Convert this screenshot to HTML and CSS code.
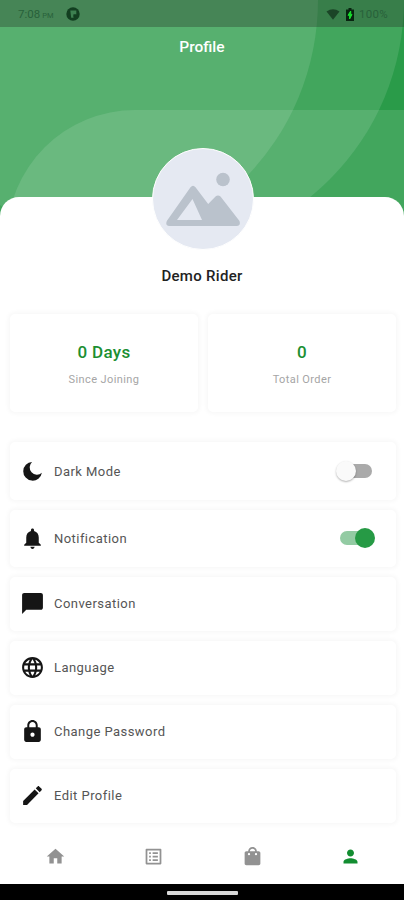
FILE: index.html
```
<!DOCTYPE html>
<html lang="en">
<head>
    <meta charset="UTF-8">
    <meta name="viewport" content="width=device-width, initial-scale=1.0">
    <title>Profile</title>
    <link rel="stylesheet" href="styles.css">
</head>
<body>

    <!-- Header -->
    <header class="header">
        <svg class="header-bg" width="404" height="220" viewBox="0 0 404 220">
            <g fill="#fff" fill-opacity="0.112">
                <circle cx="150" cy="0" r="254"/>
                <circle cx="64" cy="0" r="254"/>
                <path d="M7 238A128 128 0 0 1 135 110H404V238Z"/>
            </g>
        </svg>
        <div class="status-bar">
            <div class="time"><span>7:08</span><small>PM</small></div>
            <svg width="14" height="14" viewBox="0 0 14 14">
                <circle cx="7" cy="7" r="6.7" fill="#123f20"/>
                <path d="M4.3 3.5h6v4H7.6v3.2H5.2z" fill="#3d8050"/>
                <path d="M7.5 7.5h2.8l-2.8 3z" fill="#123f20"/>
            </svg>
            <div class="status-right">
                <svg width="14" height="11" viewBox="0 0 14 11"><path d="M0.5 2.5Q7-1.8 13.5 2.5L7 10.8z" fill="#1b4527"/></svg>
                <svg class="battery" width="8" height="13" viewBox="0 0 8 13">
                    <path d="M2.5 0h3v1.5H8V13H0V1.5h2.5z" fill="#082410"/>
                    <path d="M4.7 3L2 7.3h1.6V11L6 6.4H4.7z" fill="#18e02d" stroke="#18e02d"/>
                </svg>
                <span class="percent">100%</span>
            </div>
        </div>
        <h1>Profile</h1>
    </header>

    <!-- Profile -->
    <main class="sheet">
        <div class="avatar">
            <svg width="100" height="100" viewBox="0 0 100 100" fill="#bac2cc">
                <circle cx="70" cy="30.5" r="6.8"/>
                <path fill-rule="evenodd" d="M37.5 38.3Q40 35.3 42.5 38.3L55.2 55L62.5 47.5Q65 45.6 67.5 47.5L86.5 72Q88 76.5 84 77H16Q12 76.5 13.8 72ZM39.5 50L24 71H49Z"/>
            </svg>
        </div>
        <h2>Demo Rider</h2>

        <div class="stats">
            <div class="card stat">
                <strong>0 Days</strong>
                <span>Since Joining</span>
            </div>
            <div class="card stat">
                <strong>0</strong>
                <span>Total Order</span>
            </div>
        </div>

        <!-- Settings -->
        <div class="menu">
            <div class="card row row-dark">
                <svg viewBox="0 0 24 24"><path d="M11.6 2.8A9 9 0 1 0 21 13.2A6.9 6.9 0 0 1 11.6 2.8z"/></svg>
                <span>Dark Mode</span>
                <div class="switch"></div>
            </div>
            <div class="card row row-notify">
                <svg viewBox="0 0 24 24"><path d="M12 22c1.1 0 2-.9 2-2h-4c0 1.1.89 2 2 2zm6-6v-5c0-3.07-1.64-5.64-4.5-6.32V4c0-.83-.67-1.5-1.5-1.5s-1.5.67-1.5 1.5v.68C7.63 5.36 6 7.92 6 11v5l-2 2v1h16v-1l-2-2z"/></svg>
                <span>Notification</span>
                <div class="switch on"></div>
            </div>
            <div class="card row">
                <svg viewBox="0 0 24 24"><path d="M20 2H4c-1.1 0-1.99.9-1.99 2L2 22l4-4h14c1.1 0 2-.9 2-2V4c0-1.1-.9-2-2-2z"/></svg>
                <span>Conversation</span>
            </div>
            <div class="card row">
                <svg viewBox="0 0 24 24"><path d="M11.99 2C6.47 2 2 6.48 2 12s4.47 10 9.99 10C17.52 22 22 17.52 22 12S17.52 2 11.99 2zm6.93 6h-2.95c-.32-1.25-.78-2.45-1.38-3.56 1.84.63 3.37 1.91 4.33 3.56zM12 4.04c.83 1.2 1.48 2.53 1.91 3.96h-3.82c.43-1.43 1.08-2.76 1.91-3.96zM4.26 14C4.1 13.36 4 12.69 4 12s.1-1.36.26-2h3.38c-.08.66-.14 1.32-.14 2s.06 1.34.14 2H4.26zm.82 2h2.95c.32 1.25.78 2.45 1.38 3.56-1.84-.63-3.37-1.9-4.33-3.56zm2.95-8H5.08c.96-1.66 2.49-2.93 4.33-3.56C8.81 5.55 8.35 6.75 8.03 8zM12 19.96c-.83-1.2-1.48-2.53-1.91-3.96h3.82c-.43 1.43-1.08 2.76-1.91 3.96zM14.34 14H9.66c-.09-.66-.16-1.32-.16-2s.07-1.35.16-2h4.68c.09.65.16 1.32.16 2s-.07 1.34-.16 2zm.25 5.56c.6-1.11 1.06-2.31 1.38-3.56h2.95c-.96 1.65-2.49 2.93-4.33 3.56zM16.36 14c.08-.66.14-1.32.14-2s-.06-1.34-.14-2h3.38c.16.64.26 1.31.26 2s-.1 1.36-.26 2h-3.38z"/></svg>
                <span>Language</span>
            </div>
            <div class="card row">
                <svg viewBox="0 0 24 24"><path d="M18 8h-1V6c0-2.76-2.24-5-5-5S7 3.24 7 6v2H6c-1.1 0-2 .9-2 2v10c0 1.1.9 2 2 2h12c1.1 0 2-.9 2-2V10c0-1.1-.9-2-2-2zm-6 9c-1.1 0-2-.9-2-2s.9-2 2-2 2 .9 2 2-.9 2-2 2zm3.1-9H8.9V6c0-1.71 1.39-3.1 3.1-3.1 1.71 0 3.1 1.39 3.1 3.1v2z"/></svg>
                <span>Change Password</span>
            </div>
            <div class="card row">
                <svg viewBox="0 0 24 24"><path d="M3 17.25V21h3.75L17.81 9.94l-3.75-3.75L3 17.25zM20.71 7.04c.39-.39.39-1.02 0-1.41l-2.34-2.34c-.39-.39-1.02-.39-1.41 0l-1.83 1.83 3.75 3.75 1.83-1.83z"/></svg>
                <span>Edit Profile</span>
            </div>
        </div>
    </main>

    <!-- Bottom navigation -->
    <nav class="bottom-nav">
        <a><svg viewBox="0 0 24 24"><path d="M10 20v-6h4v6h5v-8h3L12 3 2 12h3v8z"/></svg></a>
        <a><svg viewBox="0 0 24 24"><path d="M19 5v14H5V5h14m1.1-2H3.9c-.5 0-.9.4-.9.9v16.2c0 .4.4.9.9.9h16.2c.4 0 .9-.5.9-.9V3.9c0-.5-.5-.9-.9-.9zM11 7h6v2h-6V7zm0 4h6v2h-6v-2zm0 4h6v2h-6zM7 7h2v2H7zm0 4h2v2H7zm0 4h2v2H7z"/></svg></a>
        <a><svg viewBox="0 0 24 24"><path d="M19 6h-2c0-2.76-2.24-5-5-5S7 3.24 7 6H5c-1.1 0-1.99.9-1.99 2L3 20c0 1.1.9 2 2 2h14c1.1 0 2-.9 2-2V8c0-1.1-.9-2-2-2zm-7-3c1.66 0 3 1.34 3 3H9c0-1.66 1.34-3 3-3zM8 8a1.3 1.3 0 1 1 0 2.6A1.3 1.3 0 0 1 8 8zm8 0a1.3 1.3 0 1 1 0 2.6A1.3 1.3 0 0 1 16 8z"/></svg></a>
        <a class="active"><svg viewBox="0 0 24 24"><path d="M12 12c2.21 0 4-1.79 4-4s-1.79-4-4-4-4 1.79-4 4 1.79 4 4 4zm0 2c-2.67 0-8 1.34-8 4v2h16v-2c0-2.66-5.33-4-8-4z"/></svg></a>
    </nav>
    <div class="system-bar"><div class="home-line"></div></div>

</body>
</html>
```
FILE: styles.css
```
* { box-sizing: border-box; }
body { margin: 0; width: 404px; height: 900px; overflow: hidden; display: flex; flex-direction: column; background: #fff; font-family: Roboto, sans-serif; color: #222; }
h1, h2 { margin: 0; font-weight: 500; text-align: center; }

/* Header */
.header { position: relative; height: 197px; flex: none; background: #2a9b49; box-shadow: 0 23px 0 #2a9b49; }
.header-bg { position: absolute; top: 0; left: 0; }
.header h1 { position: relative; margin-top: 10px; font-size: 15.5px; line-height: 20px; color: #fff; }
.status-bar { position: relative; height: 27px; padding: 1px 16px 0 18px; display: flex; align-items: center; background: rgba(35, 45, 35, 0.33); font-size: 11.5px; color: #28613a; }
.time { width: 48px; display: flex; align-items: baseline; gap: 2px; font-weight: 400; }
.time small { font-size: 7.5px; }
.status-right { margin-left: auto; display: flex; align-items: center; }
.battery { margin: 0 5px 0 6px; }
.percent { letter-spacing: 0.3px; }

/* Profile */
.sheet { position: relative; flex: 1; min-height: 0; padding: 0 8px; background: #fff; border-radius: 19px 19px 0 0; }
.avatar { width: 102px; height: 102px; margin: -49px 0 0 144px; border: 1.5px solid #fff; border-radius: 50%; background: #e5e9f2; overflow: hidden; }
.avatar svg { display: block; }
h2 { margin-top: 15px; font-size: 15px; line-height: 22px; letter-spacing: 0.3px; }
.card { background: #fff; border-radius: 5px; box-shadow: 0 0 4px 2px rgba(0, 0, 0, 0.03); }
.stats { display: flex; gap: 10px; margin: 27px 0 0 2px; }
.stat { width: 188px; height: 98px; display: flex; flex-direction: column; align-items: center; padding-top: 27px; }
.stat strong { font-size: 17px; line-height: 22px; font-weight: 500; letter-spacing: 0.3px; color: #1c8f32; }
.stat span { margin-top: 10px; font-size: 11px; line-height: 14px; letter-spacing: 0.4px; color: #a5a5a5; }

/* Settings */
.menu { display: flex; flex-direction: column; gap: 10px; margin: 30px 0 0 2px; }
.row { width: 386px; height: 54px; padding: 0 19px 2px 10px; display: flex; align-items: center; font-size: 13px; letter-spacing: 0.45px; color: #555; }
.row svg { width: 25px; height: 25px; margin-right: 9px; fill: #151515; }
.row-dark { height: 58px; padding-bottom: 0; }
.row-notify { height: 57px; padding-bottom: 1px; }
.switch { position: relative; width: 32px; height: 14px; margin: 0 5px 0 auto; border-radius: 7px; background: #aaa; }
.switch::after { content: ""; position: absolute; top: -3px; left: -4px; width: 20px; height: 20px; border-radius: 50%; background: #fafafa; box-shadow: 0 1px 2px rgba(0, 0, 0, 0.3); }
.switch.on { background: #93cba3; }
.switch.on::after { left: 15px; background: #269a45; box-shadow: none; }

/* Bottom navigation */
.bottom-nav { position: relative; height: 56px; flex: none; display: flex; padding: 0 4px 0 6px; background: #fff; }
.bottom-nav a { flex: 1; display: flex; align-items: center; justify-content: center; }
.bottom-nav svg { width: 21px; height: 21px; fill: #929292; }
.bottom-nav .active svg { fill: #128d31; }
.system-bar { height: 16px; flex: none; background: #000; display: flex; justify-content: center; padding-top: 7px; }
.home-line { width: 71px; height: 4px; border-radius: 1px; background: #d8d8d8; }
```
